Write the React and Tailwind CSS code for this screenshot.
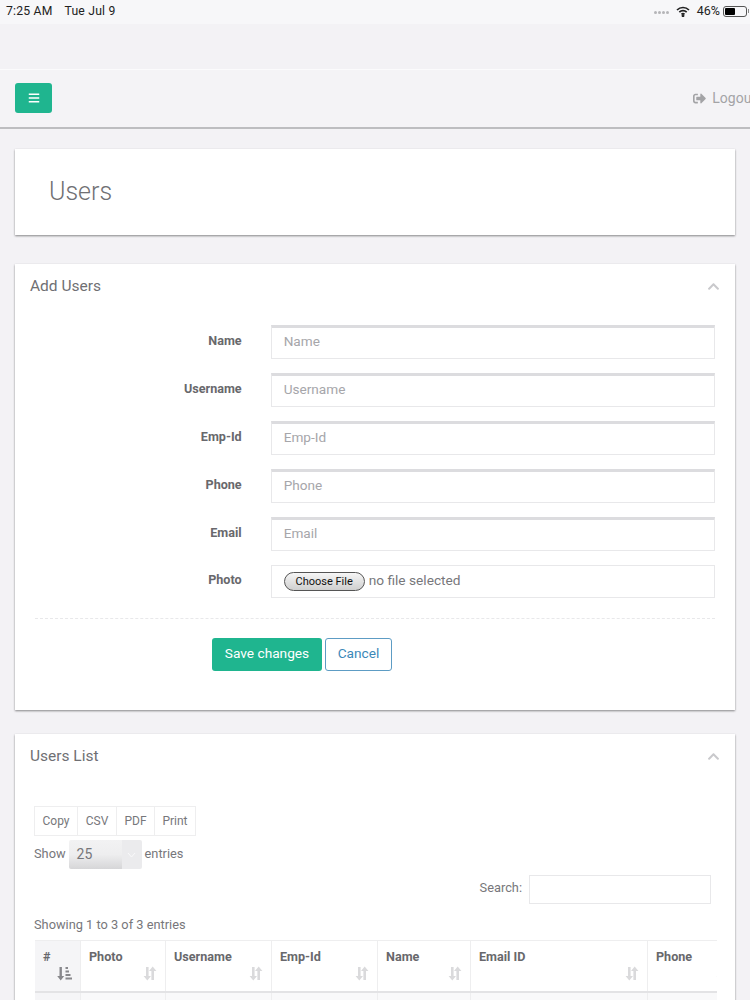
import React from "react";
import { FaBars, FaSignOutAlt, FaChevronUp } from "react-icons/fa";

function SortIdle() {
  return (
    <svg width="14" height="15" viewBox="0 0 14 15" fill="#dadadc">
      <path d="M3 1h2.600v9H8l-3.700 4.500L.6 10H3z" />
      <path d="M9.700.5l3.700 4.500H11v9H8.400V5H6z" />
    </svg>
  );
}

function SortActive() {
  return (
    <svg width="15" height="15" viewBox="0 0 15 15" fill="#88888c">
      <path d="M2.500 1h2.400v9h2.300l-3.500 4.500L.2 10h2.300z" />
      <path d="M8.500 1h2.500v2H8.500zM8.500 4.500h3.500v2H8.500zM8.500 8h5v2h-5zM8.500 11.500H15v2H8.500z" />
    </svg>
  );
}

const fields = ["Name", "Username", "Emp-Id", "Phone", "Email"];
const cols = [
  { t: "#", w: "w-[46px]", bg: "bg-[#f5f5f7]", active: true },
  { t: "Photo", w: "w-[85px]" },
  { t: "Username", w: "w-[106px]" },
  { t: "Emp-Id", w: "w-[106px]" },
  { t: "Name", w: "w-[93px]" },
  { t: "Email ID", w: "w-[177px]" },
  { t: "Phone", w: "w-[91px]" },
];

function Card({ title, children, cls }) {
  return (
    <section className={`bg-white shadow-[0_1px_2px_rgba(0,0,0,0.45)] ${cls}`}>
      <div className="flex items-center justify-between pl-[15px] pr-[15px] pt-[12px]">
        <h2 className="text-[15.500px] leading-[20px] text-[#6f6f73]">{title}</h2>
        <FaChevronUp className="text-[13px] text-[#c9c9cc]" />
      </div>
      {children}
    </section>
  );
}

export default function App() {
  return (
    <div
      className="w-[750px] h-[1000px] overflow-hidden bg-[#f3f2f5] text-[#6f6f73]"
      style={{ fontFamily: "Roboto, 'Liberation Sans', sans-serif" }}
    >
      <div className="h-[24px] bg-[#f7f7f9] flex items-center justify-between pl-[6px] pr-[1px] text-[12.200px] text-[#222] pb-[2px]">
        <div className="flex gap-[12px] tracking-[0.2px]">
          <span>7:25 AM</span>
          <span>Tue Jul 9</span>
        </div>
        <div className="flex items-center">
          <div className="flex gap-[1px] mr-[7px] mt-[3px]">
            <i className="block w-[3px] h-[3px] rounded-full bg-[#b5b5b8]" />
            <i className="block w-[3px] h-[3px] rounded-full bg-[#b5b5b8]" />
            <i className="block w-[3px] h-[3px] rounded-full bg-[#b5b5b8]" />
            <i className="block w-[3px] h-[3px] rounded-full bg-[#b5b5b8]" />
          </div>
          <svg width="14" height="11" viewBox="0 0 14 11" fill="none" stroke="#222" strokeWidth="1.700" className="mr-[7px]">
            <path d="M1 4a8.500 8.500 0 0 1 12 0" />
            <path d="M3.300 6.200a5.300 5.300 0 0 1 7.400 0" />
            <path d="M5.500 8.400a2.200 2.200 0 0 1 3 0" />
            <circle cx="7" cy="9.700" r="0.600" fill="#222" />
          </svg>
          <span className="text-[12.500px] mr-[3px]">46%</span>
          <div className="w-[24px] h-[11px] border border-[#555] rounded-[3px] p-[1px]">
            <div className="w-[10px] h-full bg-black rounded-[1px]" />
          </div>
          <div className="w-[1px] h-[4px] bg-[#888] ml-[1px]" />
        </div>
      </div>

      <div className="h-[46px] bg-[#f3f2f5] border-b border-[#fbfbfc]" />

      <header className="h-[59px] bg-[#f4f3f6] border-b-2 border-[#bdbdc0] flex items-center justify-between pl-[15px] overflow-hidden pb-[1px]">
        <button className="w-[37px] h-[30px] bg-[#1fb58f] rounded-[3px] flex items-center justify-center text-white">
          <FaBars className="text-[12px]" />
        </button>
        <div className="flex items-center gap-[6px] text-[14px] text-[#a3a3a6] mr-[-6px] shrink-0">
          <FaSignOutAlt className="text-[13px]" />
          <span>Logout</span>
        </div>
      </header>

      <main className="px-[15px] pt-[20px]">
        <section className="bg-white h-[86px] flex items-center pl-[34px] shadow-[0_1px_2px_rgba(0,0,0,0.45)]">
          <h1 className="text-[25px] font-light text-[#707074] leading-[30px]">Users</h1>
        </section>

        <Card title="Add Users" cls="mt-[29px] h-[446px]">
          <form className="pt-[29px] px-[20px]">
            <div className="flex flex-col gap-[14px]">
              {fields.map((f) => (
                <div key={f} className="flex">
                  <label className="w-[207px] text-right text-[12.600px] font-bold leading-[14px] pt-[9px] text-[#68686c]">{f}</label>
                  <input
                    readOnly
                    placeholder={f}
                    className="ml-[29px] w-[445px] h-[34px] bg-white border border-[#e8e8ea] border-t-[3px] border-t-[#dcdcdf] px-[12px] pb-[4px] text-[13.600px] outline-none placeholder:text-[#a6a6aa]"
                  />
                </div>
              ))}
              <div className="flex">
                <label className="w-[207px] text-right text-[12.600px] font-bold leading-[14px] pt-[8px] text-[#68686c]">Photo</label>
                <div className="ml-[29px] w-[445px] h-[33px] border border-[#e8e8ea] pl-[12px] flex items-center">
                  <span className="w-[81px] h-[19px] rounded-full border border-[#555] bg-gradient-to-b from-[#f6f6f6] to-[#cfcfcf] text-[11px] text-[#111] flex items-center justify-center pt-[1px]">
                    Choose File
                  </span>
                  <span className="ml-[4px] text-[13.700px] text-[#77777b] mb-[2px]">no file selected</span>
                </div>
              </div>
            </div>
            <div className="mt-[20px] border-t border-dashed border-[#e8e8ea]" />
            <div className="flex gap-[3px] mt-[19px] ml-[177px]">
              <button type="button" className="w-[110px] h-[33px] bg-[#1fb58f] rounded-[3px] text-white text-[13.700px] pb-[2px]">Save changes</button>
              <button type="button" className="w-[67px] h-[33px] bg-white border border-[#5d9cc4] rounded-[3px] text-[#3b88b8] text-[13.700px] pb-[2px]">Cancel</button>
            </div>
          </form>
        </Card>

        <Card title="Users List" cls="mt-[24px] h-[401px]">
          <div className="pt-[40px] pl-[19px] pr-[18px]">
            <div className="flex w-fit border border-[#eeeeef] text-[12px] text-[#77777b] h-[30px]">
              {["Copy", "CSV", "PDF", "Print"].map((b, i) => (
                <span key={b} className={`flex items-center justify-center ${["w-[42px]", "w-[39px]", "w-[38px]", "w-[41px]"][i]} ${i ? "border-l border-[#eeeeef]" : ""}`}>
                  {b}
                </span>
              ))}
            </div>
            <div className="flex items-center text-[12.800px] mt-[4px] text-[#77777b]">
              <span className="mb-[2px]">Show</span>
              <div className="ml-[3px] w-[73px] h-[29px] rounded-[2px] flex overflow-hidden text-[14px]">
                <div className="flex-1 flex items-center pl-[8px] bg-gradient-to-b from-[#f2f2f3] via-[#eeeeef] to-[#d6d6d8]">25</div>
                <div className="w-[20px] bg-[#ebebed] flex items-center justify-center">
                  <svg width="9" height="6" viewBox="0 0 9 6" fill="none" stroke="#f9f9fa" strokeWidth="1">
                    <path d="M1 1l3.500 4L8 1" />
                  </svg>
                </div>
              </div>
              <span className="ml-[3px] mb-[2px]">entries</span>
            </div>
            <div className="flex items-center justify-end mt-[6px] pr-[6px] text-[12.800px] text-[#77777b]">
              <span className="mb-[4px]">Search:</span>
              <input readOnly className="ml-[7px] w-[182px] h-[29px] border border-[#e8e8ea] outline-none" />
            </div>
            <p className="mt-[13px] text-[12.800px] leading-[16px] text-[#77777b]">Showing 1 to 3 of 3 entries</p>
            <div className="mt-[7px] ml-[1px] overflow-hidden w-[682px]">
              <div className="flex w-max border-y border-[#eeeeef] border-b-2 border-b-[#e3e3e5] h-[53px]">
                {cols.map((c) => (
                  <div key={c.t} className={`${c.w} ${c.bg || ""} shrink-0 border-r border-[#eeeeef] px-[8px] pt-[8px] flex flex-col`}>
                    <span className="text-[12.600px] font-bold leading-[16px] text-[#68686c]">{c.t}</span>
                    <div className="flex justify-end mt-[1px]">
                      {c.active ? <SortActive /> : <SortIdle />}
                    </div>
                  </div>
                ))}
              </div>
              <div className="flex w-max h-[10px]">
                {cols.map((c) => (
                  <div key={c.t} className={`${c.w} shrink-0 border-r border-[#eeeeef] ${c.active ? "bg-[#f5f5f7]" : "bg-[#f9f9fa]"}`} />
                ))}
              </div>
            </div>
          </div>
        </Card>
      </main>
    </div>
  );
}
